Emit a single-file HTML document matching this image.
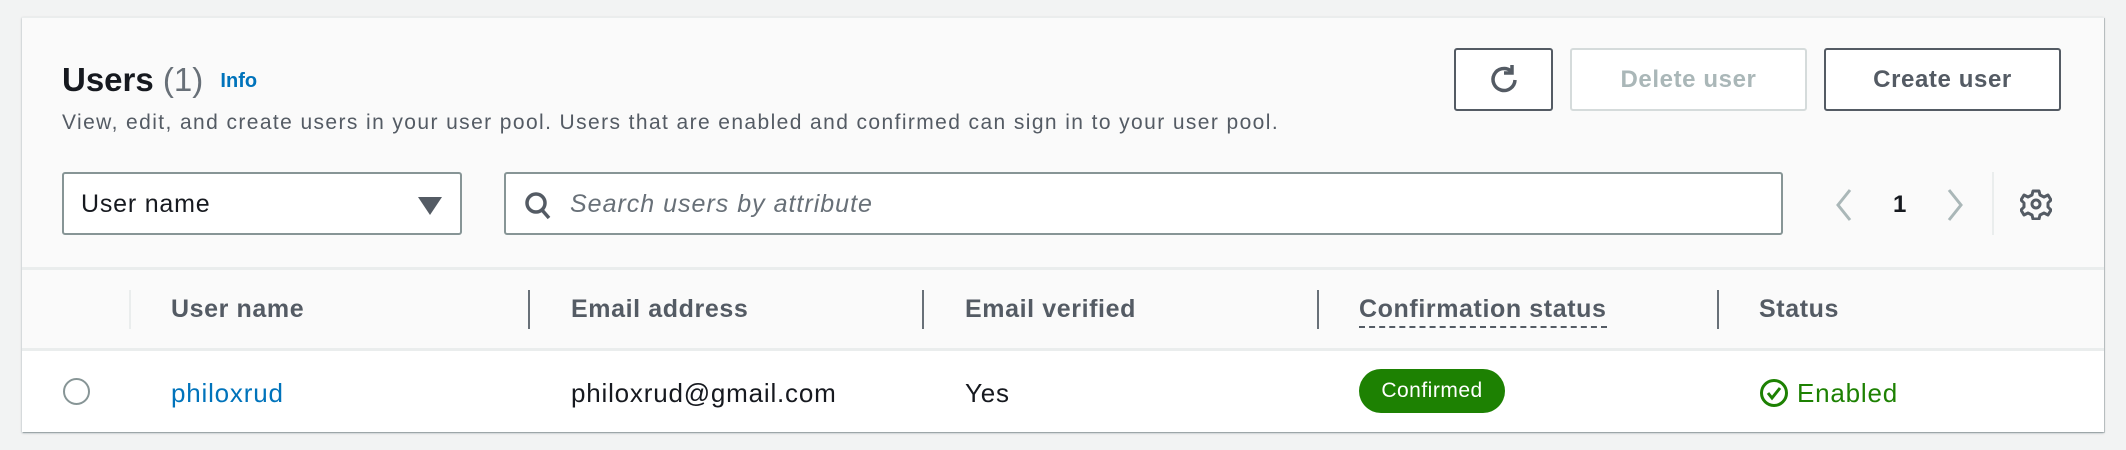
<!DOCTYPE html>
<html><head><meta charset="utf-8"><style>
*{box-sizing:border-box;margin:0;padding:0}
body{width:2126px;height:450px;background:#f2f3f3;font-family:"Liberation Sans",sans-serif;position:relative;overflow:hidden;color:#16191f}
.a{position:absolute;white-space:nowrap}
.card{left:22px;top:17px;width:2082px;height:415px;background:#fafafa;box-shadow:0 1px 2px rgba(0,28,36,.35),1px 1px 0 rgba(0,28,36,.15);border-top:1px solid #eaeded}
.btn{border:2px solid #545b64;border-radius:3px;background:#fff;height:63px;top:48px;display:flex;align-items:center;justify-content:center;font-weight:bold;font-size:24px;letter-spacing:0.6px;color:#545b64}
.th{top:295px;font-weight:bold;font-size:25px;letter-spacing:0.6px;color:#545b64}
.vd{width:2px;height:39px;top:290px;background:#687078}
.td{top:378px;font-size:26px;letter-spacing:0.8px}
</style></head><body>
<div class="a card"></div>
<div class="a" style="left:62px;top:61px;font-size:33px;font-weight:bold">Users <span style="font-weight:normal;color:#687078">(1)</span> <span style="font-size:20px;color:#0073bb;vertical-align:4px;margin-left:8px">Info</span></div>
<div class="a" style="left:62px;top:111px;font-size:21px;letter-spacing:1.4px;color:#545b64">View, edit, and create users in your user pool. Users that are enabled and confirmed can sign in to your user pool.</div>
<div class="a btn" style="left:1454px;width:99px"><svg width="34" height="34" viewBox="0 0 34 34"><path d="M24 8A11 11 0 1 0 28 17" fill="none" stroke="#545b64" stroke-width="3.5"/><path d="M25 2v8h-8" fill="none" stroke="#545b64" stroke-width="3.5"/></svg></div>
<div class="a btn" style="left:1570px;width:237px;border-color:#d5dbdb;color:#aab7b8">Delete user</div>
<div class="a btn" style="left:1824px;width:237px">Create user</div>
<div class="a" style="left:62px;top:172px;width:400px;height:63px;border:2px solid #879596;border-radius:3px;background:#fff;font-size:25px;letter-spacing:0.8px;padding:16px 0 0 17px">User name
<svg class="a" style="left:354px;top:23px" width="24" height="18"><path d="M0 0h24L12 18z" fill="#545b64"/></svg></div>
<div class="a" style="left:504px;top:172px;width:1279px;height:63px;border:2px solid #879596;border-radius:3px;background:#fff;font-size:25px;letter-spacing:1px;padding:16px 0 0 64px;font-style:italic;color:#687078">Search users by attribute
<svg class="a" style="left:18px;top:17px" width="28" height="30"><circle cx="12" cy="12" r="9" fill="none" stroke="#545b64" stroke-width="3.5"/><path d="M18 19l7 8" stroke="#545b64" stroke-width="3.5"/></svg></div>
<svg class="a" style="left:1834px;top:188px" width="20" height="34"><path d="M16 2L4 17l12 15" fill="none" stroke="#aab7b8" stroke-width="3"/></svg>
<div class="a" style="left:1893px;top:191px;font-size:24px;font-weight:bold">1</div>
<svg class="a" style="left:1945px;top:188px" width="20" height="34"><path d="M4 2l12 15L4 32" fill="none" stroke="#aab7b8" stroke-width="3"/></svg>
<div class="a" style="left:1992px;top:172px;width:2px;height:63px;background:#eaeded"></div>
<svg class="a" style="left:2020px;top:188px" width="32" height="32" viewBox="0 0 32 32"><path d="M13 3h6l1 4 4 2 4-2 3 5-3 3v4l3 3-3 5-4-2-4 2-1 4h-6l-1-4-4-2-4 2-3-5 3-3v-4l-3-3 3-5 4 2 4-2z" fill="none" stroke="#545b64" stroke-width="3" stroke-linejoin="round"/><circle cx="16" cy="16" r="4" fill="none" stroke="#545b64" stroke-width="3"/></svg>
<div class="a" style="left:22px;top:267px;width:2082px;height:3px;background:#eaeded"></div>
<div class="a" style="left:22px;top:348px;width:2082px;height:84px;background:#fff;border-top:3px solid #eaeded"></div>
<div class="a vd" style="left:129px;background:#eaeded"></div>
<div class="a vd" style="left:528px"></div>
<div class="a vd" style="left:922px"></div>
<div class="a vd" style="left:1317px"></div>
<div class="a vd" style="left:1717px"></div>
<div class="a th" style="left:171px">User name</div>
<div class="a th" style="left:571px">Email address</div>
<div class="a th" style="left:965px">Email verified</div>
<div class="a th" style="left:1359px;border-bottom:2px dashed #545b64;padding-bottom:2px">Confirmation status</div>
<div class="a th" style="left:1759px">Status</div>
<div class="a" style="left:63px;top:378px;width:27px;height:27px;border:2px solid #879596;border-radius:50%"></div>
<div class="a td" style="left:171px;color:#0073bb">philoxrud</div>
<div class="a td" style="left:571px">philoxrud@gmail.com</div>
<div class="a td" style="left:965px">Yes</div>
<div class="a" style="left:1359px;top:369px;width:146px;height:44px;border-radius:22px;background:#1d8102;color:#fff;font-size:21px;letter-spacing:0.5px;text-align:center;line-height:44px">Confirmed</div>
<svg class="a" style="left:1759px;top:378px" width="30" height="30"><circle cx="15" cy="15" r="12.5" fill="none" stroke="#1d8102" stroke-width="3"/><path d="M9 15l4 5 8-10" fill="none" stroke="#1d8102" stroke-width="3"/></svg>
<div class="a td" style="left:1797px;color:#1d8102">Enabled</div>
</body></html>
